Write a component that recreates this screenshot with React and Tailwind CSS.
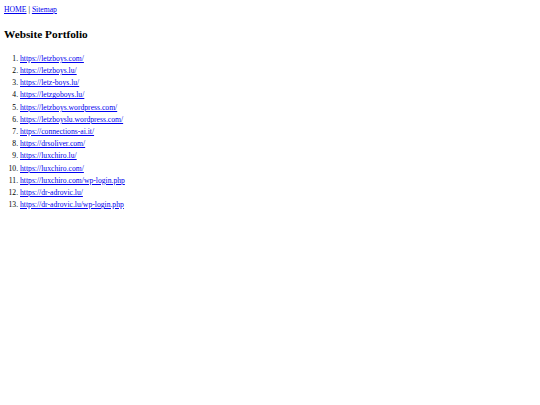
export default function App() {
  const links = [
    "https://letzboys.com/",
    "https://letzboys.lu/",
    "https://letz-boys.lu/",
    "https://letzgoboys.lu/",
    "https://letzboys.wordpress.com/",
    "https://letzboyslu.wordpress.com/",
    "https://connections-ai.it/",
    "https://drsoliver.com/",
    "https://luxchiro.lu/",
    "https://luxchiro.com/",
    "https://luxchiro.com/wp-login.php",
    "https://dr-adrovic.lu/",
    "https://dr-adrovic.lu/wp-login.php",
  ];
  return (
    <div className="min-h-[405px] bg-white text-black px-[4px] pt-[3.5px] text-[7.65px] leading-[12.17px] font-['Liberation_Serif',serif]">
      <div>
        <a href="#" className="text-[#0000ee] underline">HOME</a> |{" "}
        <a href="#" className="text-[#0000ee] underline">Sitemap</a>
      </div>
      <h2 className="mt-[12px] mb-[12.3px] text-[11.3px] leading-[13px] font-bold">Website Portfolio</h2>
      <ol className="list-decimal pl-[16px] ml-0">
        {links.map((l) => (
          <li key={l} className="pl-0">
            <a href="#" className="text-[#0000ee] underline">{l}</a>
          </li>
        ))}
      </ol>
    </div>
  );
}
